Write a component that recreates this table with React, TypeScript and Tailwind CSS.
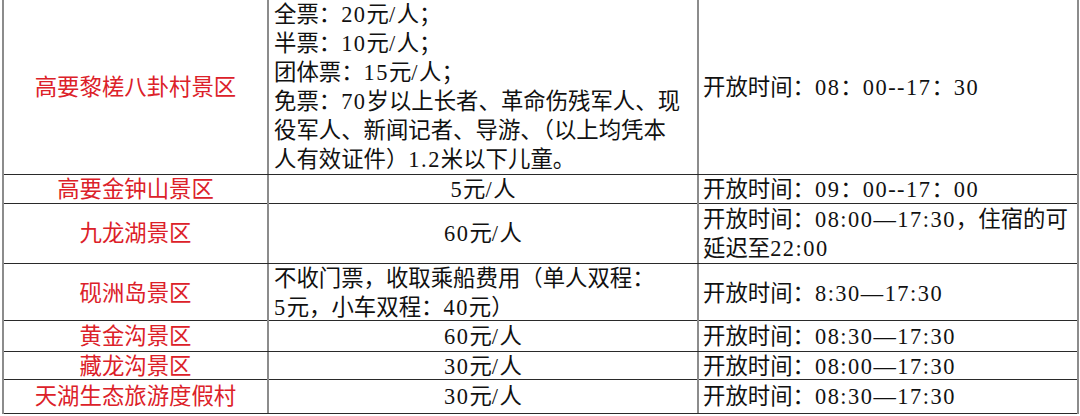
import React from 'react';

type Row = {
  name: string;
  price: string[];
  priceLeft?: boolean;
  hours: string[];
  h: string;
};

const rows: Row[] = [
  {
    name: '高要黎槎八卦村景区',
    priceLeft: true,
    price: [
      '全票：20元/人；',
      '半票：10元/人；',
      '团体票：15元/人；',
      '免票：70岁以上长者、革命伤残军人、现',
      '役军人、新闻记者、导游、（以上均凭本',
      '人有效证件）1.2米以下儿童。',
    ],
    hours: ['开放时间：08：00--17：30'],
    h: 'h-[175px]',
  },
  { name: '高要金钟山景区', price: ['5元/人'], hours: ['开放时间：09：00--17：00'], h: 'h-[29px]' },
  {
    name: '九龙湖景区',
    price: ['60元/人'],
    hours: ['开放时间：08:00—17:30，住宿的可', '延迟至22:00'],
    h: 'h-[60px]',
  },
  {
    name: '砚洲岛景区',
    priceLeft: true,
    price: ['不收门票，收取乘船费用（单人双程：', '5元，小车双程：40元）'],
    hours: ['开放时间：8:30—17:30'],
    h: 'h-[57px]',
  },
  { name: '黄金沟景区', price: ['60元/人'], hours: ['开放时间：08:30—17:30'], h: 'h-[31px]' },
  { name: '藏龙沟景区', price: ['30元/人'], hours: ['开放时间：08:00—17:30'], h: 'h-[28px]' },
  { name: '天湖生态旅游度假村', price: ['30元/人'], hours: ['开放时间：08:30—17:30'], h: 'h-[34px]' },
];

// latin runs (digits, colons, dashes) are set a little looser than the CJK text
function Line({ text }: { text: string }) {
  const parts = text.split(/([0-9:.\-\/—]+)/);
  return (
    <div>
      {parts.map((p, i) =>
        i % 2 === 1 ? (
          <span key={i} className="tracking-[1.5px]">
            {p}
          </span>
        ) : (
          <span key={i}>{p}</span>
        ),
      )}
    </div>
  );
}

export default function App() {
  return (
    <div className="w-[1080px] h-[416px] bg-white pl-[2px] overflow-hidden font-['Liberation_Serif','Noto_Sans_CJK_SC',serif] text-[22.4px] leading-[29px] text-[#111]">
      <div className="w-[1077px] border-x-2 border-[#8c8c8c]">
        {rows.map((r, i) => (
          <div
            key={i}
            className={`grid grid-cols-[265px_430px_378px] border-b border-[#2a2a2a] ${r.h}`}
          >
            {/* name */}
            <div className="flex items-center justify-center border-r-2 border-[#8c8c8c] text-[#dc2129] whitespace-nowrap">
              {r.name}
            </div>
            {/* ticket price */}
            <div
              className={`flex flex-col justify-center border-r-2 border-[#8c8c8c] whitespace-nowrap ${
                r.priceLeft ? 'items-start pl-[5px]' : 'items-center'
              }`}
            >
              {r.price.map((l, j) => (
                <Line key={j} text={l} />
              ))}
            </div>
            {/* opening hours */}
            <div className="flex flex-col justify-center pl-[4px] whitespace-nowrap">
              {r.hours.map((l, j) => (
                <Line key={j} text={l} />
              ))}
            </div>
          </div>
        ))}
      </div>
    </div>
  );
}
